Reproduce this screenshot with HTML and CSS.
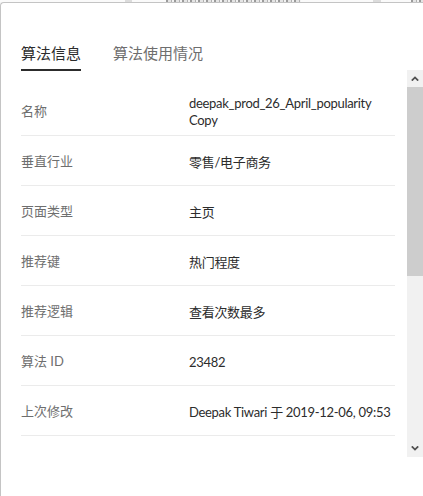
FILE: index.html
```html
<!DOCTYPE html>
<html lang="zh">
<head>
<meta charset="utf-8">
<title>算法信息</title>
<link rel="stylesheet" href="styles.css">
</head>
<body>
<div class="backdrop">
  <span class="bd-block bd-a"></span>
  <span class="bd-frag bd-f1"></span>
  <span class="bd-block bd-b"></span>
  <span class="bd-frag bd-f2"></span>
</div>
<div class="modal">
  <div class="tabs">
    <div class="tab active">算法信息</div>
    <div class="tab">算法使用情况</div>
  </div>
  <div class="body">
    <div class="content">
      <div class="row first">
        <div class="label">名称</div>
        <div class="value">deepak_prod_26_April_popularity<br>Copy</div>
      </div>
      <div class="row">
        <div class="label">垂直行业</div>
        <div class="value">零售/电子商务</div>
      </div>
      <div class="row">
        <div class="label">页面类型</div>
        <div class="value">主页</div>
      </div>
      <div class="row">
        <div class="label">推荐键</div>
        <div class="value">热门程度</div>
      </div>
      <div class="row">
        <div class="label">推荐逻辑</div>
        <div class="value">查看次数最多</div>
      </div>
      <div class="row">
        <div class="label">算法 ID</div>
        <div class="value">23482</div>
      </div>
      <div class="row">
        <div class="label">上次修改</div>
        <div class="value">Deepak Tiwari 于 2019-12-06, 09:53</div>
      </div>
    </div>
    <div class="scrollbar">
      <div class="sb-btn">
        <svg width="8" height="5" viewBox="0 0 8 5"><polyline points="0.8,4.6 4,1.4 7.2,4.6" fill="none" stroke="#505050" stroke-width="1.8"/></svg>
      </div>
      <div class="sb-thumb"></div>
      <div class="sb-track"></div>
      <div class="sb-btn">
        <svg width="8" height="5" viewBox="0 0 8 5"><polyline points="0.8,0.4 4,3.6 7.2,0.4" fill="none" stroke="#505050" stroke-width="1.8"/></svg>
      </div>
    </div>
  </div>
</div>
</body>
</html>
```
FILE: styles.css
```css
html, body {
  margin: 0;
  padding: 0;
  background: #f5f5f5;
}
body {
  width: 423px;
  height: 496px;
  overflow: hidden;
  font-family: Lato, "Noto Sans CJK SC", sans-serif;
  color: #2c2c2c;
}
.backdrop {
  height: 2px;
  overflow: hidden;
  display: flex;
  background: #fafafa;
}
.bd-block {
  display: block;
  height: 2px;
  background: #dcdcdc;
}
.bd-a { width: 7px; margin-left: 125px; }
.bd-frag {
  display: block;
  height: 2px;
  background: repeating-linear-gradient(90deg, #9a9a9a 0 2px, #e4e4e4 2px 5px, #b0b0b0 5px 6px, #f2f2f2 6px 8px);
}
.bd-f1 { margin-left: 34px; width: 136px; }
.bd-b { width: 8px; margin-left: 72px; }
.bd-f2 { margin-left: 30px; width: 12px; }
.modal {
  box-sizing: border-box;
  height: 494px;
  background: #fff;
  border-left: 1px solid #c4c4c4;
  border-top: 1px solid #c4c4c4;
  border-top-left-radius: 4px;
  display: flex;
  flex-direction: column;
}
.tabs {
  display: flex;
  gap: 32px;
  padding: 40px 0 0 20px;
}
.tab {
  font-size: 15px;
  line-height: 20px;
  padding-bottom: 6px;
  border-bottom: 2px solid transparent;
  color: #6e6e6e;
}
.tab.active {
  color: #2c2c2c;
  border-bottom-color: #2c2c2c;
}
.body {
  display: flex;
  height: 387px;
  margin-top: -1px;
}
.content {
  flex: 1;
  padding: 17px 12px 0 20px;
  overflow: hidden;
}
.row {
  display: flex;
  align-items: center;
  padding-top: 2px;
  min-height: 47px;
  border-bottom: 1px solid #ebebeb;
  font-size: 13px;
  line-height: 17px;
}
.row.first {
  padding-top: 1px;
}
.label {
  width: 168px;
  flex: none;
  color: #6e6e6e;
}
.value {
  color: #2c2c2c;
  padding-top: 1px;
  letter-spacing: -0.3px;
  white-space: nowrap;
}
.scrollbar {
  width: 16px;
  flex: none;
  display: flex;
  flex-direction: column;
  background: #f1f1f1;
}
.sb-btn {
  height: 17px;
  flex: none;
  display: flex;
  align-items: center;
  justify-content: center;
}
.sb-thumb {
  height: 189px;
  flex: none;
  background: #cdcdcd;
}
.sb-track {
  flex: 1;
}
```
